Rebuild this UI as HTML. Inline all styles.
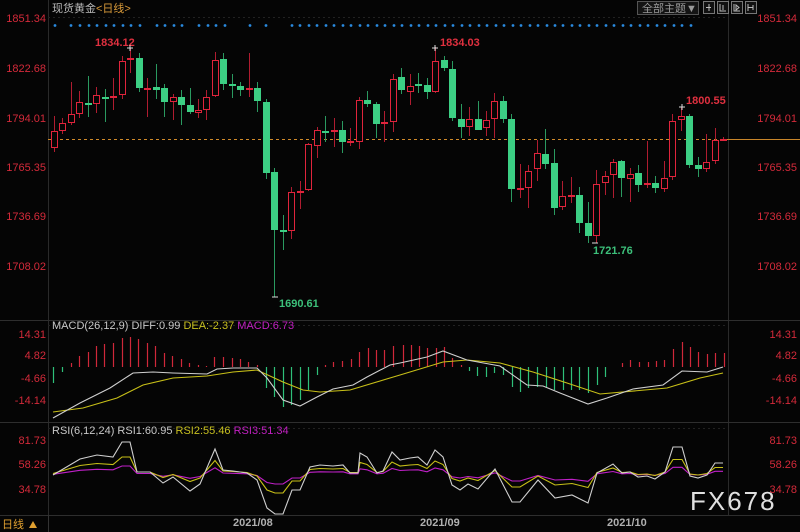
<!DOCTYPE html>
<html><head><meta charset="utf-8">
<style>
html,body{margin:0;padding:0;background:#050505;width:800px;height:532px;overflow:hidden}
svg{display:block}
text{font-family:"Liberation Sans","Noto Sans CJK SC",sans-serif}
</style></head><body>
<svg id="s" width="800" height="532" viewBox="0 0 800 532" xmlns="http://www.w3.org/2000/svg">
<rect width="800" height="532" fill="#050505"/>
<!-- frame lines -->
<line x1="48.5" y1="0" x2="48.5" y2="532" stroke="#2a2a2a"/>
<line x1="728.5" y1="0" x2="728.5" y2="515" stroke="#2a2a2a"/>
<line x1="0" y1="320.5" x2="800" y2="320.5" stroke="#2e2e2e"/>
<line x1="0" y1="422.5" x2="800" y2="422.5" stroke="#2e2e2e"/>
<line x1="0" y1="515.5" x2="800" y2="515.5" stroke="#2e2e2e"/>
<line x1="48" y1="17.5" x2="728" y2="17.5" stroke="#222" stroke-dasharray="2,3"/>
<line x1="48" y1="325.5" x2="728" y2="325.5" stroke="#222" stroke-dasharray="2,3"/>
<line x1="48" y1="428.5" x2="728" y2="428.5" stroke="#222" stroke-dasharray="2,3"/>
<!-- orange dashed price line -->
<line x1="48" y1="139.5" x2="728" y2="139.5" stroke="#d08a2a" stroke-dasharray="3,3"/>
<line x1="728" y1="139.5" x2="800" y2="139.5" stroke="#c8862a"/>
<!-- title -->
<text x="52" y="12" font-size="11" fill="#b8b8b8">现货黄金<tspan fill="#d89a3a">&lt;日线&gt;</tspan></text>
<!-- buttons -->
<rect x="637.5" y="1.5" width="61" height="13" fill="#141414" stroke="#555"/>
<text x="642" y="12" font-size="11" fill="#9a9a9a">全部主题▼</text>
<g stroke="#777" fill="#111">
<rect x="703.5" y="1.5" width="11" height="12"/><rect x="717.5" y="1.5" width="11" height="12"/>
<rect x="731.5" y="1.5" width="11" height="12"/><rect x="745.5" y="1.5" width="11" height="12"/>
</g>
<g stroke="#bbb" fill="none">
<path d="M706 7.5h5M709 4v7"/><path d="M720 4v7h6M723 5v5"/><path d="M734 4v7h6M736 5v5l3-2.5z"/><path d="M748 4v7M748 7.5h5M753 5v5"/>
</g>
<!-- right price labels -->
<g font-size="11" fill="#d42a3a" text-anchor="end">
<text x="797" y="22">1851.34</text><text x="797" y="72">1822.68</text><text x="797" y="122">1794.01</text>
<text x="797" y="171">1765.35</text><text x="797" y="220">1736.69</text><text x="797" y="270">1708.02</text>
<text x="797" y="338">14.31</text><text x="797" y="359">4.82</text><text x="797" y="382">-4.66</text><text x="797" y="404">-14.14</text>
<text x="797" y="444">81.73</text><text x="797" y="468">58.26</text><text x="797" y="493">34.78</text>
</g>
<g font-size="11" fill="#d42a3a" text-anchor="end">
<text x="46" y="22">1851.34</text><text x="46" y="72">1822.68</text><text x="46" y="122">1794.01</text>
<text x="46" y="171">1765.35</text><text x="46" y="220">1736.69</text><text x="46" y="270">1708.02</text>
<text x="46" y="338">14.31</text><text x="46" y="359">4.82</text><text x="46" y="382">-4.66</text><text x="46" y="404">-14.14</text>
<text x="46" y="444">81.73</text><text x="46" y="468">58.26</text><text x="46" y="493">34.78</text>
</g>
<g id="c"></g>
<!-- annotations -->
<g font-size="11" font-weight="bold">
<text x="95" y="46" fill="#e0303f">1834.12</text>
<text x="440" y="46" fill="#e0303f">1834.03</text>
<text x="686" y="104" fill="#e0303f">1800.55</text>
<text x="279" y="307" fill="#3cc07a">1690.61</text>
<text x="593" y="254" fill="#3cc07a">1721.76</text>
</g>
<g stroke="#ddd"><path d="M127 48h6M130 45v6M432 48h6M435 45v6M679 107h6M682 104v6M272 297h6M592 243h6"/></g>
<!-- MACD labels -->
<text x="52" y="329" font-size="11"><tspan fill="#c8c8c8">MACD(26,12,9) DIFF:0.99 </tspan><tspan fill="#c8c020">DEA:-2.37 </tspan><tspan fill="#c020c0">MACD:6.73</tspan></text>
<text x="52" y="434" font-size="11"><tspan fill="#c8c8c8">RSI(6,12,24) RSI1:60.95 </tspan><tspan fill="#c8c020">RSI2:55.46 </tspan><tspan fill="#c020c0">RSI3:51.34</tspan></text>
<text x="690" y="510" font-size="26" fill="#e0e0e0" letter-spacing="2">FX678</text>
<!-- bottom -->
<line x1="48.5" y1="515" x2="48.5" y2="532" stroke="#333"/>
<text x="2" y="528" font-size="11" fill="#e0a030">日线</text>
<path d="M29 528l4-7 4 7z" fill="#e0a030"/>
<g font-size="11" fill="#b0b0b0" font-weight="bold">
<text x="233" y="526">2021/08</text><text x="420" y="526">2021/09</text><text x="607" y="526">2021/10</text>
</g>
</svg>
<script>
var C=[
[148,131,116,152],[131,123,118,134],[123,114,82,125],[114,102,91,118],[103,103,76,117,'g'],[104,95,87,113],[97,98,89,122,'g'],[98,96,78,110],[95,61,56,99],[60,58,48,73],
[58,88,53,92],[88,88,78,117],[87,90,64,99],[88,102,84,117],[102,97,94,120],[97,105,90,125],[105,112,88,114],[113,110,99,118],[110,97,90,120],[96,60,52,97],
[59,84,53,90],[84,85,74,98],[86,90,82,96],[90,88,53,97],[88,101,82,112],[102,173,99,179],[172,230,168,297],[230,232,215,250],[231,192,187,239],[192,191,181,209],
[190,144,143,191],[146,130,127,158],[131,132,116,142],[132,130,118,147],[130,142,121,153],[142,141,128,146],[142,100,97,149],[100,104,91,107],[104,124,102,138],[124,122,111,142],
[122,79,74,132],[77,90,68,94],[92,86,74,105],[84,85,73,93],[85,92,78,99],[92,61,47,93],[60,68,56,71],[69,118,61,121],[119,127,104,138],[127,119,107,136],
[119,130,101,130],[128,120,111,136],[119,101,93,138],[101,119,96,123],[119,189,114,202],[188,188,164,198],[188,171,165,208],[169,153,140,181],[154,164,129,169],[163,208,149,215],
[207,196,181,210],[196,195,177,203],[195,223,187,233],[223,236,202,243],[236,184,170,243],[183,176,171,195],[175,162,159,198],[161,178,160,197],[179,174,168,202],[173,185,165,192],
[184,183,141,188],[183,188,176,193],[189,178,161,192],[177,121,114,180],[120,116,107,131],[116,165,114,168],[165,169,157,177],[169,162,134,172],[161,140,128,164],[140,139,137,141]];
var X=function(i){return 54+i*8.47};
var s='';
var R='#e0243c',G='#3ccf84';
C.forEach(function(c,i){
 var x=Math.round(X(i))+0.5,o=c[0],cl=c[1],h=c[2],l=c[3];
 var green=c[4]=='g'||cl>o;
 var col=green?G:R;
 var t=Math.min(o,cl),b=Math.max(o,cl);
 s+='<line x1="'+x+'" y1="'+h+'" x2="'+x+'" y2="'+l+'" stroke="'+(green?'#2a9a60':'#b01c30')+'"/>';
 if(b-t<2){s+='<rect x="'+(x-3.5)+'" y="'+t+'" width="7" height="2" fill="'+col+'"/>';}
 else if(green){s+='<rect x="'+(x-3.5)+'" y="'+t+'" width="7" height="'+(b-t)+'" fill="'+G+'"/>';}
 else{s+='<rect x="'+(x-3)+'" y="'+(t+0.5)+'" width="6" height="'+(b-t-1)+'" fill="#050505" stroke="'+R+'"/>';}
});
// blue dots
var skip={9:1,18:1,19:1,20:1,22:1,23:1,24:1,25:1,26:1,27:1,28:1,29:1,30:1,31:1,32:1,33:1,34:1,35:1,36:1,37:1,38:1,39:1,40:1,41:1,42:1,43:1,44:1,45:1,46:1,47:1,48:1,49:1,50:1,51:1,52:1,53:1,54:1,55:1,56:1,57:1,58:1,59:1,60:1,61:1,62:1};
for(var i=0;i<80;i++){if(i<62&&(i%1==0)){}}
var dx=[55,71,80,89,97,106,114,123,131,140,157,165,174,182,199,208,216,225,250,266,292];
for(var x=300;x<=555;x+=8.5)dx.push(Math.round(x));
for(var x=563;x<=695;x+=8.5)dx.push(Math.round(x));
dx.forEach(function(x){s+='<circle cx="'+x+'" cy="25.5" r="1.4" fill="#2a8ae0"/>';});
// MACD hist
var H=[[53,383],[62,372],[71,363],[79,356],[88,352],[96,346],[104,344],[113,343],[122,338],[130,337],[138,339],[147,343],[155,346],[164,353],[172,356],[181,359],[189,363],[198,365],[206,366],[214,357],[223,357],[232,358],[240,359],[248,362],[257,365],
[266,388],[274,397],[283,407],[291,405],[300,400],[308,390],[317,375],[325,365],[333,362],[342,361],[351,359],[359,352],[368,348],[376,350],[384,350],[393,346],[403,345],[411,345],[419,346],[427,348],[436,348],[444,347],[452,358],[461,365],
[469,371],[477,376],[486,377],[494,373],[503,375],[512,387],[520,392],[528,388],[537,387],[546,387],[554,390],[563,390],[571,390],[579,390],[588,393],[597,385],[605,377],[613,367],[622,363],[630,360],[639,362],[648,362],[656,361],[664,360],[673,349],[682,342],[690,347],[698,352],[707,354],[715,353],[724,353]];
var Z=367;
H.forEach(function(h){var up=h[1]<Z;s+='<line x1="'+(h[0]+.5)+'" y1="'+Z+'" x2="'+(h[0]+.5)+'" y2="'+h[1]+'" stroke="'+(up?'#d0283a':'#2ec07a')+'" stroke-width="1.2"/>';});
function pl(p,c){return '<polyline fill="none" stroke="'+c+'" stroke-width="1.1" points="'+p.map(function(q){return q.join(',')}).join(' ')+'"/>';}
var D=[[53,418],[80,403],[110,388],[133,373],[153,372],[173,373],[207,374],[217,369],[233,368],[257,368],[267,378],[283,400],[300,406],[317,397],[333,389],[353,385],[367,377],[390,365],[400,363],[427,357],[443,351],[467,360],[500,366],[527,385],[543,386],[560,393],[588,404],[607,398],[633,389],[663,385],[682,371],[707,372],[723,367]];
var E=[[53,412],[83,408],[117,398],[143,385],[173,378],[207,376],[233,372],[257,370],[283,382],[303,390],[320,392],[350,390],[400,375],[443,362],[467,360],[500,363],[533,372],[567,383],[600,394],[667,388],[700,378],[723,373]];
s+=pl(E,'#c8c018')+pl(D,'#d0d0d0');
var W=[[53,475],[80,459],[97,455],[113,457],[122,442],[130,442],[137,472],[150,472],[163,483],[173,477],[190,491],[200,484],[215,449],[223,470],[233,471],[247,473],[257,480],[267,508],[275,514],[283,514],[292,490],[300,490],[310,467],[320,465],[333,466],[343,465],[350,473],[358,473],[360,453],[367,457],[377,473],[383,471],[392,452],[400,460],[410,458],[418,457],[427,465],[435,450],[443,457],[452,485],[460,490],[468,484],[478,489],[495,469],[512,502],[520,502],[538,480],[555,498],[572,495],[588,503],[597,473],[613,464],[622,473],[630,472],[638,477],[647,476],[655,479],[665,472],[673,447],[682,447],[690,476],[698,478],[707,475],[715,463],[723,463]];
var Y=W.map(function(q){return [q[0],Math.round((q[1]*0.5+472*0.5)*10)/10]});
var P=W.map(function(q){return [q[0],Math.round((q[1]*0.25+474*0.75)*10)/10]});
s+=pl(P,'#c020c8')+pl(Y,'#c8c018')+pl(W,'#d0d0d0');
document.getElementById('c').innerHTML=s;
</script>
</body></html>
